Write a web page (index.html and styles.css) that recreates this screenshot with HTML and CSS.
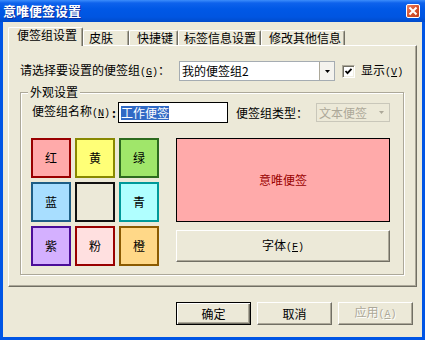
FILE: index.html
```
<!DOCTYPE html>
<html lang="zh-CN">
<head>
<meta charset="utf-8">
<title>意唯便签设置</title>
<link rel="stylesheet" href="styles.css">
</head>
<body>
<div class="window">
  <div class="titlebar">
    <span class="title">意唯便签设置</span>
    <span class="close"><svg width="12" height="12" viewBox="0 0 12 12"><path d="M3.2 3.2 L8.8 8.8 M8.8 3.2 L3.2 8.8" stroke="#fff" stroke-width="2" stroke-linecap="square"/></svg></span>
  </div>
  <div class="client">
    <div class="tabs">
      <div class="tab tab-active">便签组设置</div>
      <div class="tab tab-skin">皮肤</div>
      <div class="tab tab-keys">快捷键</div>
      <div class="tab tab-label">标签信息设置</div>
      <div class="tab tab-other">修改其他信息</div>
    </div>
    <div class="panel">
      <div class="row row-select">
        <span class="label">请选择要设置的便签组<span class="mn">(<u>G</u>)</span>：</span>
        <div class="combo combo-group">
          <span class="combo-text">我的便签组2</span>
          <span class="combo-btn"><svg width="5" height="3" viewBox="0 0 5 3"><path d="M0 0 H5 L2.5 3 Z" fill="#000"/></svg></span>
        </div>
        <span class="check"><svg width="9" height="9" viewBox="0 0 9 9"><path d="M1.5 4 L3.5 6.2 L7.5 1.8" fill="none" stroke="#000" stroke-width="1.8"/></svg></span>
        <span class="check-label">显示<span class="mn">(<u>V</u>)</span></span>
      </div>
      <div class="group">
        <div class="legend">外观设置</div>
        <div class="row row-name">
          <span class="label name-label">便签组名称<span class="mn">(<u>N</u>)</span></span><span class="colon">:</span>
          <div class="textbox"><span class="sel">工作便签</span></div>
          <span class="label type-label">便签组类型：</span>
          <div class="combo combo-disabled">
            <span class="combo-text">文本便签</span>
            <span class="combo-btn"><svg width="5" height="3" viewBox="0 0 5 3"><path d="M0 0 H5 L2.5 3 Z" fill="#ACA899"/></svg></span>
          </div>
        </div>
        <div class="appearance">
          <div class="swatches">
            <div class="swatch sw-red">红</div>
            <div class="swatch sw-yellow">黄</div>
            <div class="swatch sw-green">绿</div>
            <div class="swatch sw-blue">蓝</div>
            <div class="swatch sw-none"></div>
            <div class="swatch sw-cyan">青</div>
            <div class="swatch sw-purple">紫</div>
            <div class="swatch sw-pink">粉</div>
            <div class="swatch sw-orange">橙</div>
          </div>
          <div class="preview-col">
            <div class="preview">意唯便签</div>
            <button class="btn font-btn">字体<span class="mn">(<u>F</u>)</span></button>
          </div>
        </div>
      </div>
    </div>
    <div class="actions">
      <button class="btn btn-default">确定</button>
      <button class="btn">取消</button>
      <button class="btn btn-disabled">应用<span class="mn">(<u>A</u>)</span></button>
    </div>
  </div>
</div>
</body>
</html>
```
FILE: styles.css
```
* { box-sizing: border-box; }

body {
  margin: 0;
  font-family: "Noto Sans CJK SC", "Noto Sans", sans-serif;
  font-size: 12px;
  line-height: 14px;
  color: #000;
  background: #fff;
}

.window {
  width: 425px;
  height: 340px;
  background: #0055E5;
  display: flex;
  flex-direction: column;
}

.titlebar {
  height: 22px;
  flex: none;
  display: flex;
  align-items: center;
  justify-content: space-between;
  padding: 0 5px 0 3px;
  background: linear-gradient(to bottom, #3C8DFB 0px, #0E62EC 3px, #0058E6 9px, #0055E1 17px, #004BCB 22px);
}

.title {
  color: #fff;
  font-weight: bold;
  font-size: 13px;
  line-height: 16px;
  text-shadow: 1px 1px 0 #0A2E9E;
}

.close {
  width: 14px;
  height: 14px;
  border: 1px solid #fff;
  border-radius: 2px;
  background: linear-gradient(135deg, #EC8263 0%, #D6532F 50%, #C23E1C 100%);
  display: flex;
  align-items: center;
  justify-content: center;
}

.client {
  flex: 1;
  margin: 0 3px 3px;
  background: #ECE9D8;
  padding: 5px 5px 0;
  display: flex;
  flex-direction: column;
}

.mn {
  font-family: "Liberation Mono", monospace;
  font-size: 10px;
}

/* tabs */
.tabs {
  height: 18px;
  flex: none;
  display: flex;
  align-items: flex-end;
}

.tab {
  height: 15px;
  border-top: 1px solid #fff;
  border-left: 1px solid #fff;
  border-right: 1px solid #716F64;
  box-shadow: inset -1px 0 0 #ACA899;
  border-radius: 2px 2px 0 0;
  padding-left: 6px;
  line-height: 14px;
  white-space: nowrap;
  background: #ECE9D8;
}

.tab-active {
  width: 75px;
  height: 19px;
  margin-bottom: -1px;
  padding-left: 8px;
  position: relative;
  z-index: 1;
}

.tab-skin { width: 46px; padding-left: 5px; }
.tab-keys { width: 49px; padding-left: 7px; }
.tab-label { width: 83px; padding-left: 5px; }
.tab-other { width: 84px; padding-left: 7px; }

/* panel */
.panel {
  height: 242px;
  flex: none;
  border-top: 1px solid #fff;
  border-left: 1px solid #fff;
  border-right: 1px solid #716F64;
  border-bottom: 1px solid #716F64;
  box-shadow: inset -1px -1px 0 #ACA899;
  padding: 15px 0 0 11px;
}

.row {
  display: flex;
  align-items: center;
}

.row-select { height: 20px; }

.label { white-space: nowrap; }

.combo {
  display: flex;
  align-items: stretch;
  background: #fff;
  border: 1px solid #A5ACB2;
}

.combo-group {
  width: 156px;
  height: 20px;
  margin-left: 9px;
}

.combo-text {
  flex: 1;
  padding-left: 2px;
  display: flex;
  align-items: center;
  white-space: nowrap;
}

.combo-btn {
  width: 15px;
  display: flex;
  align-items: center;
  justify-content: center;
  border-left: 1px solid #ACA899;
  background: #F4F3EE;
}

.check {
  width: 13px;
  height: 13px;
  margin-left: 7px;
  background: #fff;
  border: 1px solid;
  border-color: #ACA899 #fff #fff #ACA899;
  box-shadow: inset 1px 1px 0 #716F64, inset -1px -1px 0 #F1EFE2;
  display: flex;
  align-items: center;
  justify-content: center;
}

.check-label { margin-left: 6px; white-space: nowrap; }

/* group box */
.group {
  margin-top: 11px;
  width: 384px;
  height: 183px;
  border: 1px solid #ACA899;
  box-shadow: inset 1px 1px 0 #fff, 1px 1px 0 #fff;
  padding: 0 0 0 10px;
}

.legend {
  width: max-content;
  margin: -8px 0 0 -3px;
  padding: 0 2px;
  background: #ECE9D8;
  line-height: 14px;
}

.row-name {
  height: 21px;
  margin-top: 3px;
}

.name-label { margin-left: 1px; }

.colon {
  width: 8px;
  text-align: center;
  font-weight: bold;
}

.textbox {
  width: 110px;
  height: 21px;
  border: 1px solid #000;
  background: #fff;
  padding: 0 0 0 2px;
  display: flex;
  align-items: center;
}

.sel {
  background: #316AC5;
  color: #fff;
  line-height: 14px;
  white-space: nowrap;
}

.type-label { margin-left: 8px; }

.combo-disabled {
  width: 74px;
  height: 19px;
  margin-left: 8px;
  background: #ECE9D8;
  border-color: #C9C7BA;
  color: #ACA899;
}

.combo-disabled .combo-btn {
  border-left: none;
  background: transparent;
}

/* appearance */
.appearance {
  display: flex;
  margin-top: 15px;
}

.swatches {
  display: grid;
  grid-template-columns: repeat(3, 40px);
  grid-auto-rows: 40px;
  gap: 4px;
}

.swatch {
  border: 2px solid;
  display: flex;
  align-items: center;
  justify-content: center;
}

.sw-red { background: #FFAAAA; border-color: #990000; }
.sw-yellow { background: #FFFF77; border-color: #888800; }
.sw-green { background: #A0E66A; border-color: #2D6B1E; }
.sw-blue { background: #A8DEFF; border-color: #1E5E86; }
.sw-none { background: #ECE9D8; border-color: #111; }
.sw-cyan { background: #B0FFFF; border-color: #009999; }
.sw-purple { background: #D4B0FF; border-color: #4B0D99; }
.sw-pink { background: #FFE0E0; border-color: #990000; }
.sw-orange { background: #FFD888; border-color: #8B5A00; }

.preview-col {
  margin-left: 17px;
  width: 214px;
  display: flex;
  flex-direction: column;
}

.preview {
  height: 84px;
  border: 1px solid #000;
  background: #FFAAAA;
  color: #990000;
  display: flex;
  align-items: center;
  justify-content: center;
}

/* buttons */
.btn {
  font-family: inherit;
  font-size: 12px;
  line-height: 14px;
  color: #000;
  background: #ECE9D8;
  border: 1px solid;
  border-color: #fff #716F64 #716F64 #fff;
  box-shadow: inset -1px -1px 0 #ACA899;
  padding: 0;
  margin: 0;
  text-align: center;
  white-space: nowrap;
}

.font-btn {
  height: 32px;
  margin-top: 8px;
}

.actions {
  display: flex;
  justify-content: flex-end;
  gap: 6px;
  margin: 15px 4px 0 0;
}

.actions .btn {
  width: 75px;
  height: 23px;
}

.actions .btn-default {
  border: 1px solid #000;
  box-shadow: inset 1px 1px 0 #fff, inset -1px -1px 0 #716F64, inset -2px -2px 0 #ACA899;
}

.btn-disabled {
  color: #ACA899;
  text-shadow: 1px 1px 0 #fff;
}
```
